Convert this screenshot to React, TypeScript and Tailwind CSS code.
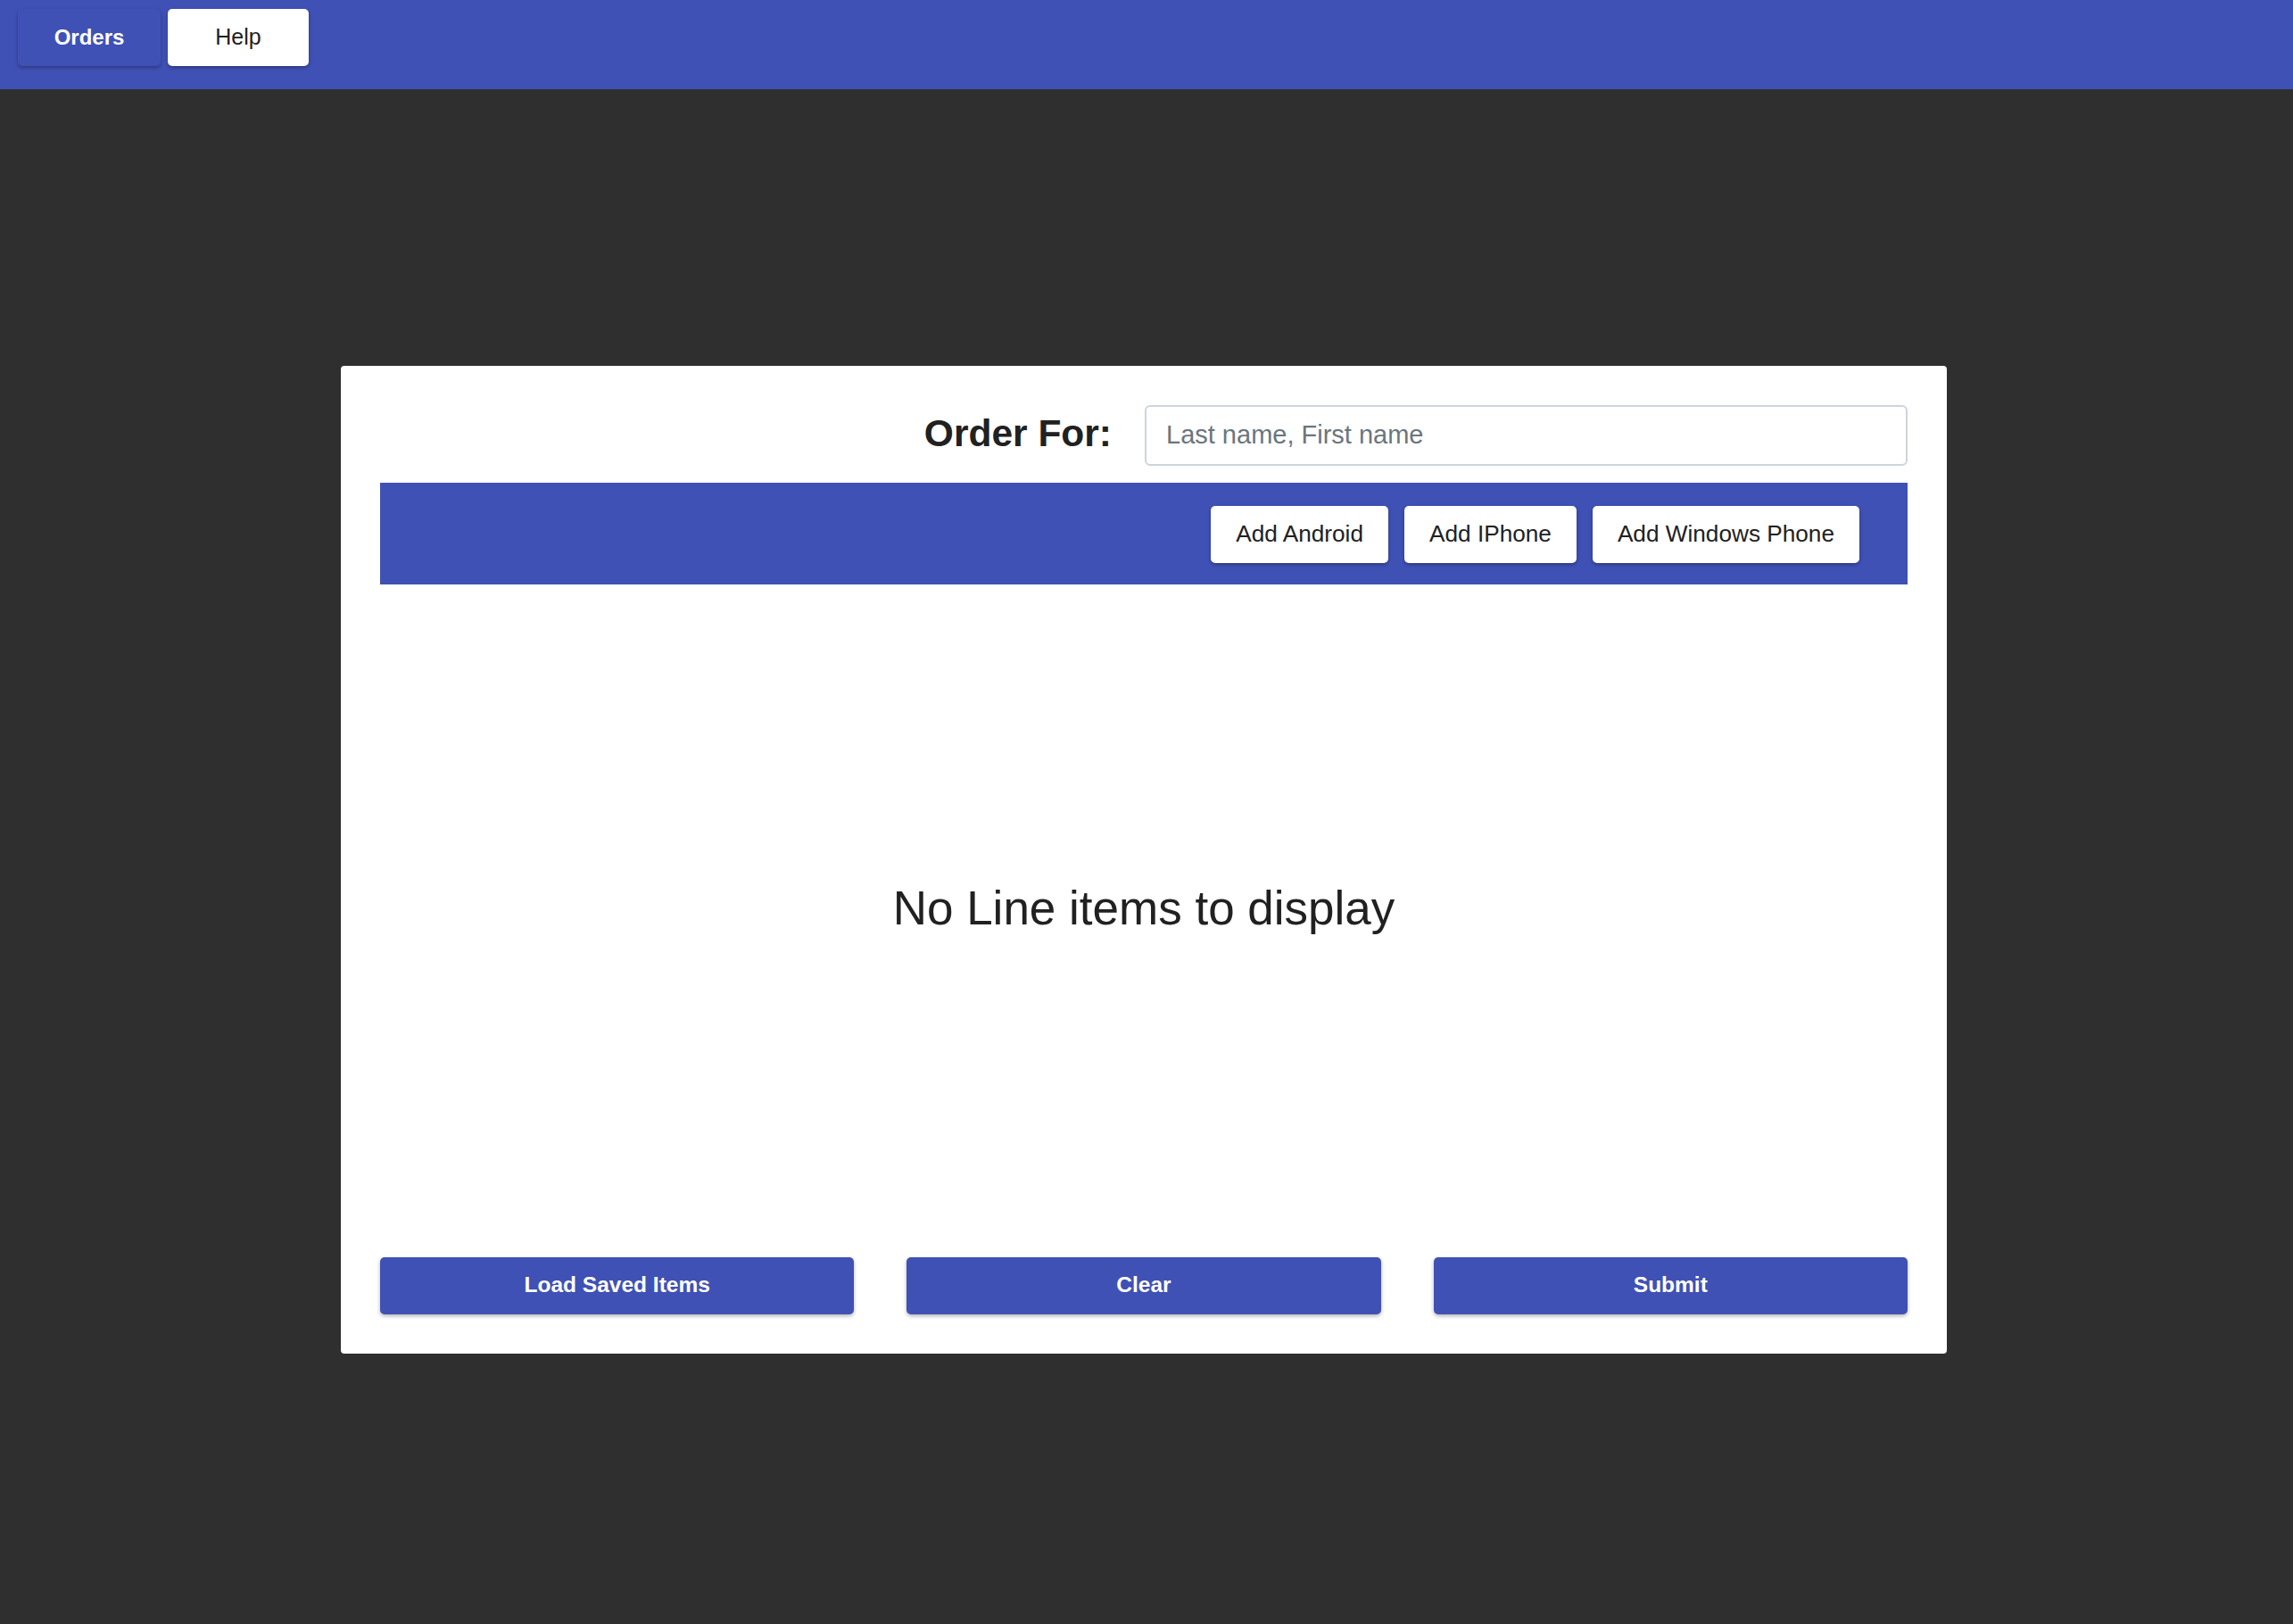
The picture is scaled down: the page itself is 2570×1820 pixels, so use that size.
import React from "react";

const raised = "shadow-[0_2px_4px_rgba(0,0,0,0.3)]";

export default function App() {
  return (
    <div className="min-h-screen flex flex-col bg-[#2f2f2f] font-['Liberation_Sans',Arial,sans-serif] text-[#212121]">
      {/* top bar */}
      <div className="h-[100px] bg-[#3f51b5] flex items-start gap-2 pl-5 pt-[10px]">
        <button className={`w-[160px] h-16 rounded-[5px] bg-[#3f51b5] text-white font-bold text-[24px] ${raised}`}>
          Orders
        </button>
        <button className={`w-[158px] h-16 rounded-[5px] bg-white text-[#212121] text-[25px] ${raised}`}>
          Help
        </button>
      </div>

      <div className="flex-1 flex items-center justify-center pt-[6px] pr-[6px]">
        <div className="w-[1800px] h-[1107px] bg-white rounded-[4px] p-[44px] flex flex-col">
          {/* order for */}
          <div className="flex items-center justify-end">
            <label className="text-[42.5px] font-bold mr-[37px] mt-[-4px]">Order For:</label>
            <input
              className="w-[855px] h-[68px] rounded-[6px] border-2 border-[#ced4da] px-[22px] text-[29px] outline-none placeholder:text-[#6c757d]"
              placeholder="Last name, First name"
            />
          </div>

          {/* toolbar */}
          <div className="mt-[19px] h-[114px] bg-[#3f51b5] flex items-center justify-end gap-[18px] pr-[54px] pt-[2px]">
            {["Add Android", "Add IPhone", "Add Windows Phone"].map((label) => (
              <button key={label} className={`h-16 px-[28px] rounded-[5px] bg-white text-[#212121] text-[26.2px] ${raised}`}>
                {label}
              </button>
            ))}
          </div>

          {/* line items */}
          <div className="flex-1 flex items-center justify-center pb-[28px]">
            <h2 className="text-[53px]">No Line items to display</h2>
          </div>

          {/* actions */}
          <div className="grid grid-cols-3 gap-[59px]">
            {["Load Saved Items", "Clear", "Submit"].map((label) => (
              <button key={label} className={`h-16 rounded-[5px] bg-[#3f51b5] text-white font-bold text-[24.5px] ${raised}`}>
                {label}
              </button>
            ))}
          </div>
        </div>
      </div>
    </div>
  );
}
